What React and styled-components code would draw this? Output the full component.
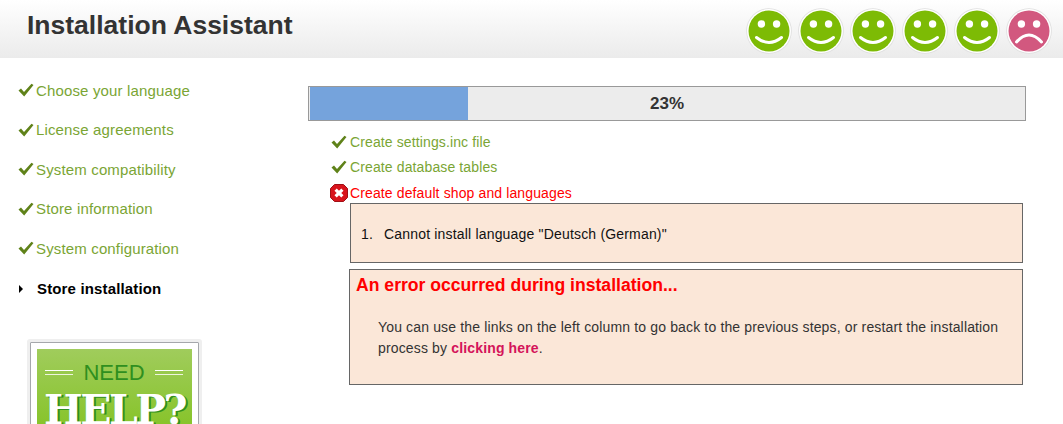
import React from 'react';
import styled, { createGlobalStyle } from 'styled-components';

const GlobalStyle = createGlobalStyle`
	html, body {
		margin: 0;
		padding: 0;
		height: 100%;
		overflow: hidden;
		background: #fff;
		font-family: 'Liberation Sans', Arial, sans-serif;
	}
	* {
		box-sizing: border-box;
	}
`;

const Page = styled.div`
	width: 1063px;
	height: 424px;
	overflow: hidden;
`;

const Header = styled.header`
	height: 58px;
	padding: 0 11px 0 27px;
	display: flex;
	align-items: center;
	justify-content: space-between;
	background: linear-gradient(to bottom, #ffffff 0%, #ebebeb 100%);
`;

const Title = styled.h1`
	margin: 0 0 8px;
	font-size: 26.5px;
	font-weight: 700;
	color: #333;
`;

const Smileys = styled.div`
	display: flex;
	gap: 6px;
	margin-top: 3px;
`;

const Content = styled.div`
	display: grid;
	grid-template-columns: 308px 718px;
`;

const Sidebar = styled.aside`
	padding: 12.5px 0 0 18px;
`;

const StepList = styled.ul`
	list-style: none;
	margin: 0;
	padding: 0;
`;

const Step = styled.li`
	height: 39.5px;
	display: flex;
	align-items: center;
	gap: 2px;
	padding-top: ${(p) => (p.$current ? '2px' : '0')};
	font-size: 15px;
	letter-spacing: 0.15px;
	color: ${(p) => (p.$current ? '#000' : '#7aa534')};
	font-weight: ${(p) => (p.$current ? 700 : 400)};
`;

const Arrow = styled.span`
	width: 0;
	height: 0;
	margin: 0 12px 0 1px;
	border-left: 4px solid #000;
	border-top: 4px solid transparent;
	border-bottom: 4px solid transparent;
`;

const HelpFrame = styled.div`
	width: 169px;
	height: 200px;
	margin: 34px 0 0 12px;
	padding: 6px;
	background: #fff;
	border: 1px solid #a5a7ab;
	box-shadow: 0 0 0 3px #efefef;
	border-radius: 1px;
`;

const HelpPanel = styled.div`
	height: 100%;
	padding-top: 12px;
	display: flex;
	flex-direction: column;
	align-items: center;
	background: linear-gradient(to bottom, #a0cc5c 0%, #88c42c 40%);
`;

const NeedRow = styled.div`
	width: 100%;
	padding: 0 9px 0 8px;
	display: flex;
	align-items: center;
	justify-content: space-between;
	font-size: 22px;
	line-height: 24px;
	color: #2f8f1f;
`;

const Rule = styled.span`
	width: 28px;
	height: 5px;
	border-top: 1px solid #fff;
	border-bottom: 1px solid #eef5dd;
`;

const HelpWord = styled.div`
	margin-top: -2px;
	font-family: 'DejaVu Serif', 'Liberation Serif', serif;
	font-size: 41px;
	line-height: 54px;
	font-weight: 700;
	letter-spacing: -2.5px;
	color: #fff;
	text-shadow: 2px 1px 0 #2f8f1f;
`;

const Main = styled.main`
	padding-top: 28px;
`;

const Progress = styled.div`
	position: relative;
	height: 35px;
	border: 1px solid #999;
	background: #ececec;
	display: flex;
	align-items: center;
	justify-content: center;
	font-size: 17px;
	font-weight: 700;
	color: #333;
`;

const ProgressFill = styled.div`
	position: absolute;
	left: 1px;
	top: 0;
	bottom: 0;
	background: #75a3dc;
`;

const ProgressLabel = styled.span`
	position: relative;
`;

const Tasks = styled.ul`
	list-style: none;
	margin: 8px 0 0;
	padding: 0 0 0 22px;
`;

const Task = styled.li`
	height: 25.5px;
	display: flex;
	align-items: center;
	gap: 2px;
	font-size: 14px;
	letter-spacing: 0.12px;
	color: ${(p) => (p.$failed ? '#ff0000' : '#7aa534')};
`;

const TaskIcon = styled.span`
	width: 18px;
	display: flex;
	justify-content: center;
`;

const ErrorList = styled.ol`
	width: 673px;
	height: 60px;
	margin: -3px 0 0 42px;
	padding: 3px 0 0 10px;
	list-style: none;
	display: flex;
	align-items: center;
	background: #fbe7d8;
	border: 1px solid #666;
	font-size: 14px;
	letter-spacing: 0.18px;
	color: #111;
`;

const ErrorItem = styled.li`
	display: flex;
`;

const ErrorNumber = styled.span`
	width: 23px;
`;

const ErrorBox = styled.div`
	width: 674px;
	height: 116px;
	margin: 6px 0 0 41px;
	padding: 4px 6px 0;
	background: #fbe7d8;
	border: 1px solid #666;
`;

const ErrorTitle = styled.h3`
	margin: 0;
	font-size: 17.6px;
	line-height: 22px;
	font-weight: 700;
	color: #ff0000;
`;

const ErrorText = styled.p`
	margin: 21px 0 0 22px;
	font-size: 14px;
	line-height: 21px;
	letter-spacing: 0.15px;
	color: #333;

	a {
		font-weight: 700;
		color: #d4145a;
		text-decoration: none;
	}
`;

const Check = () => (
	<svg width="16" height="14" viewBox="0 0 16 14">
		<path d="M0.5 7.5 L3 5.5 L6 9 L13.5 0.8 L15.5 2 L6.2 13.5 Z" fill="#5f8219" />
	</svg>
);

const ErrorIcon = () => (
	<svg width="18" height="18" viewBox="0 0 18 18">
		<path
			d="M4.5 0.5 H13.5 L17.5 4.5 V13.5 L13.5 17.5 H4.5 L0.5 13.5 V4.5 Z"
			fill="#d8141c"
			stroke="#a01016"
			strokeLinejoin="round"
		/>
		<path d="M5.6 5.6 L12.4 12.4 M12.4 5.6 L5.6 12.4" stroke="#fff" strokeWidth="3.2" />
	</svg>
);

const Smiley = ({ sad }) => (
	<svg width="46" height="46" viewBox="0 0 46 46">
		<circle cx="23" cy="23" r="22.8" fill="#dedede" />
		<circle cx="23" cy="23" r="22" fill="#fff" />
		<circle cx="23" cy="23" r="20.5" fill={sad ? '#d2587f' : '#7dbb05'} />
		<circle cx="15.4" cy="16" r="3.7" fill="#fff" />
		<circle cx="30.6" cy="16" r="3.7" fill="#fff" />
		<path
			d={sad ? 'M10.5 34 Q23 20 35.5 34' : 'M10.5 29.5 Q23 39.5 35.5 29.5'}
			fill="none"
			stroke="#fff"
			strokeWidth="3"
			strokeLinecap="round"
		/>
	</svg>
);

const steps = [
	'Choose your language',
	'License agreements',
	'System compatibility',
	'Store information',
	'System configuration',
];

const App = () => {
	return (
		<Page>
			<GlobalStyle />
			<Header>
				<Title>Installation Assistant</Title>
				<Smileys>
					{[0, 1, 2, 3, 4].map((i) => (
						<Smiley key={i} />
					))}
					<Smiley sad />
				</Smileys>
			</Header>
			<Content>
				<Sidebar>
					<StepList>
						{steps.map((s) => (
							<Step key={s}>
								<Check />
								{s}
							</Step>
						))}
						<Step $current>
							<Arrow />
							Store installation
						</Step>
					</StepList>
					<HelpFrame>
						<HelpPanel>
							<NeedRow>
								<Rule />
								NEED
								<Rule />
							</NeedRow>
							<HelpWord>HELP?</HelpWord>
						</HelpPanel>
					</HelpFrame>
				</Sidebar>
				<Main>
					<Progress>
						<ProgressFill style={{ width: '158px' }} />
						<ProgressLabel>23%</ProgressLabel>
					</Progress>
					<Tasks>
						<Task>
							<TaskIcon><Check /></TaskIcon>
							Create settings.inc file
						</Task>
						<Task>
							<TaskIcon><Check /></TaskIcon>
							Create database tables
						</Task>
						<Task $failed>
							<TaskIcon><ErrorIcon /></TaskIcon>
							Create default shop and languages
						</Task>
					</Tasks>
					<ErrorList>
						<ErrorItem>
							<ErrorNumber>1.</ErrorNumber>
							Cannot install language "Deutsch (German)"
						</ErrorItem>
					</ErrorList>
					<ErrorBox>
						<ErrorTitle>An error occurred during installation...</ErrorTitle>
						<ErrorText>
							You can use the links on the left column to go back to the previous steps, or restart the installation process by{' '}
							<a href="#restart">clicking here</a>.
						</ErrorText>
					</ErrorBox>
				</Main>
			</Content>
		</Page>
	);
};

export default App;
